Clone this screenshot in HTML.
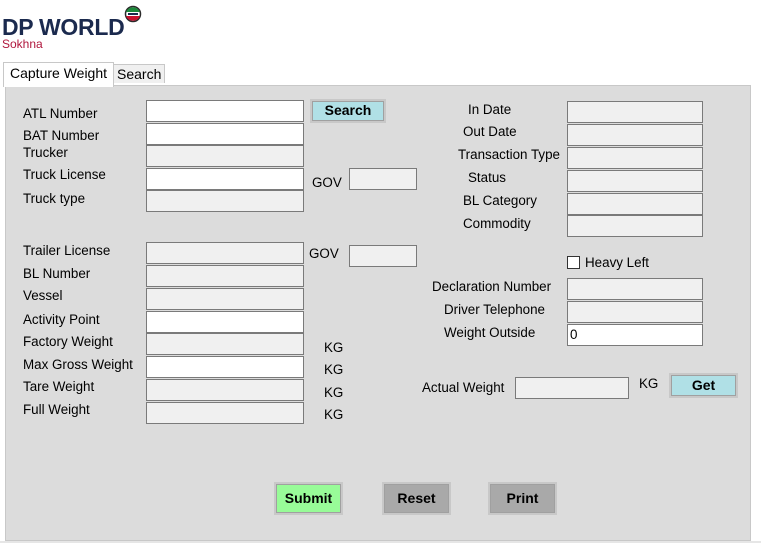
<!DOCTYPE html>
<html><head><meta charset="utf-8"><style>
*{margin:0;padding:0;box-sizing:border-box}
body{width:761px;height:553px;background:#fff;position:relative;overflow:hidden;font-family:"Liberation Sans",Arial,sans-serif;font-size:13.4px;color:#000}
.a{position:absolute}
.l{position:absolute;line-height:16px;white-space:nowrap}
.b{position:absolute;height:22px;border:1px solid #7a7a7a;background:#f0f0f0}
.w{background:#fff}
.btn{position:absolute;border:2px solid #c8c8c8;outline:1px solid #a0a0a0;outline-offset:-3px;font-weight:bold;text-align:center;font-size:14px}
</style></head><body>
<div class="a" style="left:2px;top:14px;font-weight:bold;font-size:23px;color:#1b2a4e;letter-spacing:-0.3px;line-height:26px">DP WORLD</div>
<svg class="a" style="left:122px;top:5px" width="22" height="18" viewBox="0 0 22 18"><circle cx="11" cy="9" r="7.5" fill="#fff" stroke="#2a2a2a" stroke-width="1.5"/><path d="M4 7 A7.5 7.5 0 0 1 18 7Z" fill="#1b8a3a"/><path d="M4 11 A7.5 7.5 0 0 0 18 11Z" fill="#c8102e"/><rect x="6" y="8" width="10" height="2" fill="#1b2a4e"/></svg>
<div class="a" style="left:2px;top:38px;font-size:12px;color:#b0173d;line-height:13px">Sokhna</div>
<div class="a" style="left:3px;top:62px;width:111px;height:25px;background:#fff;border:1px solid #c8c8c8;border-bottom:none;z-index:2"></div>
<div class="l" style="left:10px;top:65px;z-index:3;font-size:14px">Capture Weight</div>
<div class="a" style="left:113px;top:64px;width:52px;height:22px;background:#f0f0f0;border:1px solid #c8c8c8;border-bottom:none"></div>
<div class="l" style="left:117px;top:66px;font-size:14px">Search</div>
<div class="a" style="left:5px;top:85px;width:746px;height:456px;background:#dcdcdc;border:1px solid #c8c8c8;outline:2px solid #fff"></div>
<div class="a" style="left:0;top:541px;width:761px;height:2px;background:#e6e6e6"></div>

<div class="l" style="left:23px;top:106px">ATL Number</div>
<div class="l" style="left:23px;top:128px">BAT Number</div>
<div class="l" style="left:23px;top:145px">Trucker</div>
<div class="l" style="left:23px;top:167px">Truck License</div>
<div class="l" style="left:23px;top:191px">Truck type</div>
<div class="l" style="left:23px;top:243px">Trailer License</div>
<div class="l" style="left:23px;top:266px">BL Number</div>
<div class="l" style="left:23px;top:288px">Vessel</div>
<div class="l" style="left:23px;top:312px">Activity Point</div>
<div class="l" style="left:23px;top:334px">Factory Weight</div>
<div class="l" style="left:23px;top:357px">Max Gross Weight</div>
<div class="l" style="left:23px;top:379px">Tare Weight</div>
<div class="l" style="left:23px;top:402px">Full Weight</div>

<div class="b w" style="left:146px;top:100px;width:158px"></div>
<div class="b w" style="left:146px;top:123px;width:158px"></div>
<div class="b" style="left:146px;top:145px;width:158px"></div>
<div class="b w" style="left:146px;top:168px;width:158px"></div>
<div class="b" style="left:146px;top:190px;width:158px"></div>
<div class="b" style="left:146px;top:242px;width:158px"></div>
<div class="b" style="left:146px;top:265px;width:158px"></div>
<div class="b" style="left:146px;top:288px;width:158px"></div>
<div class="b w" style="left:146px;top:311px;width:158px"></div>
<div class="b" style="left:146px;top:333px;width:158px"></div>
<div class="b w" style="left:146px;top:356px;width:158px"></div>
<div class="b" style="left:146px;top:379px;width:158px"></div>
<div class="b" style="left:146px;top:402px;width:158px"></div>

<div class="btn" style="left:310px;top:99px;width:76px;height:24px;background:#b0e0e6;line-height:19px">Search</div>
<div class="l" style="left:312px;top:175px">GOV</div>
<div class="b" style="left:349px;top:168px;width:68px"></div>
<div class="l" style="left:309px;top:246px">GOV</div>
<div class="b" style="left:349px;top:245px;width:68px"></div>
<div class="l" style="left:324px;top:340px">KG</div>
<div class="l" style="left:324px;top:362px">KG</div>
<div class="l" style="left:324px;top:385px">KG</div>
<div class="l" style="left:324px;top:407px">KG</div>

<div class="l" style="left:468px;top:102px">In Date</div>
<div class="l" style="left:463px;top:124px">Out Date</div>
<div class="l" style="left:458px;top:147px">Transaction Type</div>
<div class="l" style="left:468px;top:170px">Status</div>
<div class="l" style="left:463px;top:193px">BL Category</div>
<div class="l" style="left:463px;top:216px">Commodity</div>
<div class="b" style="left:567px;top:101px;width:136px"></div>
<div class="b" style="left:567px;top:124px;width:136px"></div>
<div class="b" style="left:567px;top:147px;width:136px"></div>
<div class="b" style="left:567px;top:170px;width:136px"></div>
<div class="b" style="left:567px;top:193px;width:136px"></div>
<div class="b" style="left:567px;top:215px;width:136px"></div>

<div class="a" style="left:567px;top:256px;width:13px;height:13px;border:1px solid #333;background:#fff"></div>
<div class="l" style="left:585px;top:255px">Heavy Left</div>
<div class="l" style="left:432px;top:279px">Declaration Number</div>
<div class="l" style="left:444px;top:302px">Driver Telephone</div>
<div class="l" style="left:444px;top:325px">Weight Outside</div>
<div class="b" style="left:567px;top:278px;width:136px"></div>
<div class="b" style="left:567px;top:301px;width:136px"></div>
<div class="b w" style="left:567px;top:324px;width:136px;padding-left:2px;line-height:19px">0</div>

<div class="l" style="left:422px;top:380px">Actual Weight</div>
<div class="b" style="left:515px;top:377px;width:114px"></div>
<div class="l" style="left:639px;top:376px">KG</div>
<div class="btn" style="left:669px;top:373px;width:69px;height:25px;background:#b0e0e6;line-height:20px">Get</div>

<div class="btn" style="left:274px;top:482px;width:69px;height:33px;background:#98fb98;line-height:28px">Submit</div>
<div class="btn" style="left:382px;top:482px;width:69px;height:33px;background:#a9a9a9;line-height:28px">Reset</div>
<div class="btn" style="left:488px;top:482px;width:69px;height:33px;background:#a9a9a9;line-height:28px">Print</div>
</body></html>
